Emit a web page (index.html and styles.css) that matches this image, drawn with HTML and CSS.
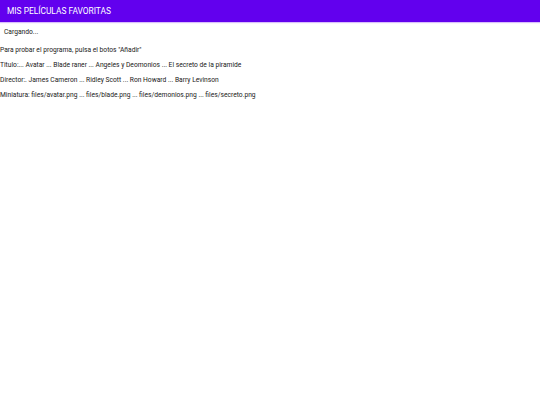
FILE: index.html
```html
<!DOCTYPE html>
<html lang="es">
<head>
<meta charset="utf-8">
<title>Mis películas favoritas</title>
<link rel="stylesheet" href="styles.css">
</head>
<body>
<header class="appbar">MIS PELÍCULAS FAVORITAS</header>
<div class="status">Cargando...</div>
<main class="content">
  <p class="line">Para probar el programa, pulsa el botos "Añadir"</p>
  <p class="line">Titulo:... Avatar ... Blade raner ... Angeles y Deomonios ... El secreto de la piramide</p>
  <p class="line">Director:. James Cameron ... Ridley Scott ... Ron Howard ... Barry Levinson</p>
  <p class="line">Miniatura: files/avatar.png ... files/blade.png ... files/demonios.png ... files/secreto.png</p>
</main>
</body>
</html>
```
FILE: styles.css
```css
html, body {
  margin: 0;
  padding: 0;
  background: #ffffff;
  font-family: Roboto, "Liberation Sans", sans-serif;
  color: #1a1a1a;
}
.appbar {
  height: 22px;
  line-height: 22px;
  background: #6200ee;
  color: #ffffff;
  font-size: 8.4px;
  padding-left: 7px;
  box-shadow: 0 1px 1px rgba(98, 0, 238, 0.25);
}
.status {
  font-size: 6.7px;
  padding: 4px 0 0 4px;
  height: 13px;
  line-height: 13px;
}
.content {
  padding-top: 4px;
}
.line {
  margin: 0;
  font-size: 6.7px;
  line-height: 15px;
}
```
